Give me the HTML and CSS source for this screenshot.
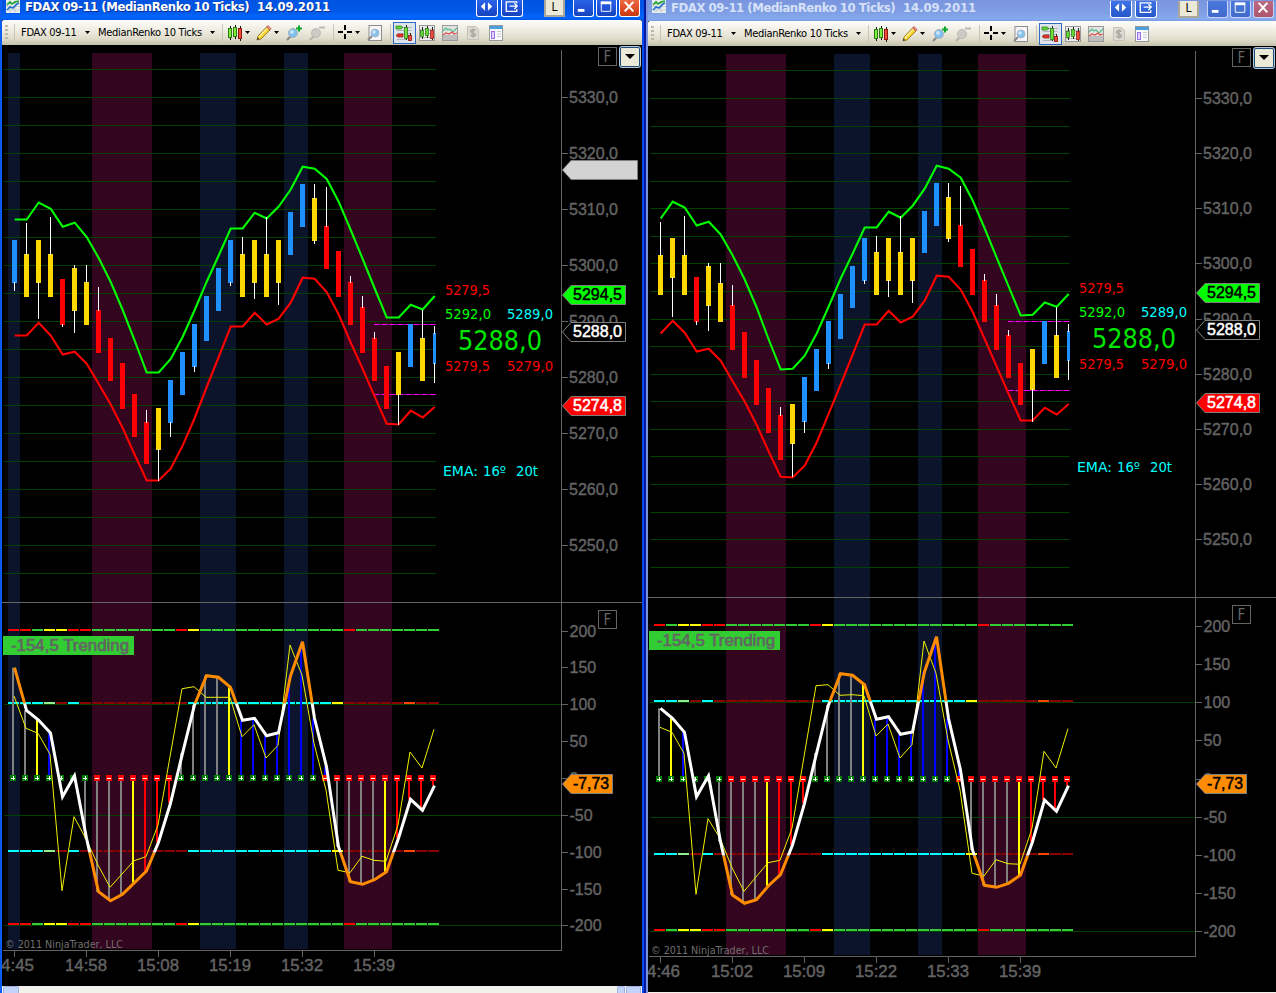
FILE: index.html
```html
<!DOCTYPE html>
<html lang="en">
<head>
    <meta charset="UTF-8">
    <title>FDAX 09-11 (MedianRenko 10 Ticks)</title>
    <link rel="stylesheet" href="styles.css">
</head>
<body>
    <svg class="defs" width="0" height="0">
        <symbol id="i-app" viewBox="0 0 14 13">
            <path d="M0 0h14v13H0z" fill="#e9eef0"/>
            <path d="M0 3h14M0 6.500h14M0 10h14M4 0v13M9 0v13" stroke="#b3bcc2" stroke-width=".6"/>
            <path d="M1 5l3-3 2 2 3-2 4-1" stroke="#1fa32b" stroke-width="1.600" fill="none"/>
            <path d="M1 10l3-3 3 1 4-4 2-1" stroke="#2470c9" stroke-width="1.600" fill="none"/>
        </symbol>
        <symbol id="i-bars" viewBox="0 0 16 16">
            <path d="M3.500 1v14M8.500 0v14M13.500 1v15" stroke="#111"/>
            <rect x="1.500" y="3.500" width="3" height="9" fill="#7df03c" stroke="#2c7a12"/>
            <rect x="6.500" y="2.500" width="3" height="9" fill="#7df03c" stroke="#2c7a12"/>
            <rect x="11.500" y="3.500" width="3" height="10" fill="#f24b3c" stroke="#8e1810"/>
        </symbol>
        <symbol id="i-pencil" viewBox="0 0 16 16">
            <path d="M1 15l1-4 8.500-9L14 5l-9 9z" fill="#f8d32c" stroke="#8b6914" stroke-width=".8"/>
            <path d="M3 12l8.500-9" stroke="#fff09a" stroke-width="1.300"/>
            <path d="M10.500 2L12 .5 15 3.500 14 5z" fill="#f28a80" stroke="#a44" stroke-width=".6"/>
            <path d="M1 15l.6-2.400L3.400 14z" fill="#333"/>
        </symbol>
        <symbol id="i-zoomin" viewBox="0 0 16 16">
            <path d="M1 15l4-4" stroke="#888" stroke-width="2.200"/>
            <circle cx="7" cy="8" r="4.500" fill="#7fbfee" stroke="#a8b4c0"/>
            <circle cx="6" cy="7" r="2" fill="#c8e6fa"/>
            <path d="M10 3.500h6M13 .5v6" stroke="#0ba82a" stroke-width="2"/>
        </symbol>
        <symbol id="i-zoomout" viewBox="0 0 16 16">
            <path d="M1 15l4-4" stroke="#b5b3ac" stroke-width="2.200"/>
            <circle cx="7" cy="8" r="4.500" fill="#cbcac5" stroke="#bdbbb4"/>
            <path d="M10 2.500h6" stroke="#bbb9b2" stroke-width="2"/>
        </symbol>
        <symbol id="i-cross" viewBox="0 0 16 16">
            <path d="M0 7h5M9 7h5M7 0v5M7 9v5" stroke="#000" stroke-width="2"/>
        </symbol>
        <symbol id="i-docmag" viewBox="0 0 16 16">
            <rect x="2" y=".5" width="12.500" height="15" fill="#f6f6f6" stroke="#8d8d8d"/>
            <path d="M1 15l4-4" stroke="#888" stroke-width="2"/>
            <circle cx="8" cy="8" r="4" fill="#86c2ec" stroke="#a8b8c8"/>
            <circle cx="7" cy="7" r="1.700" fill="#d2ebfb"/>
        </symbol>
        <symbol id="i-trader" viewBox="0 0 18 18">
            <path d="M6 3.500h11M2 6.500h14M2 9.500h14M2 15.500h9" stroke="#b2b5b8"/>
            <path d="M1 2h5l2 1.500L6 5H1z" fill="#5fd53a" stroke="#2c7a12" stroke-width=".7"/>
            <path d="M1 11.500L3 10h5v3H3z" fill="#e8372c" stroke="#8e1810" stroke-width=".7"/>
            <path d="M11.500 1v15M15.500 9v8" stroke="#222"/>
            <rect x="9.500" y="3.500" width="3" height="11" fill="#6fe03c" stroke="#2c7a12" stroke-width=".8"/>
            <rect x="13.500" y="11.500" width="3" height="5" fill="#f24b3c" stroke="#8e1810" stroke-width=".8"/>
        </symbol>
        <symbol id="i-candles" viewBox="0 0 16 16">
            <rect x=".5" y=".5" width="15" height="15" fill="#ececec" stroke="#999"/>
            <path d="M1 4.500h14M1 8.500h14M1 12.500h14" stroke="#bbb"/>
            <path d="M3.500 2v12M8.500 1v12M13.500 2v13" stroke="#222"/>
            <rect x="1.500" y="5.500" width="3" height="6" fill="#62d838" stroke="#2c7a12" stroke-width=".7"/>
            <rect x="6.500" y="3.500" width="3" height="7" fill="#62d838" stroke="#2c7a12" stroke-width=".7"/>
            <rect x="11.500" y="5.500" width="3" height="8" fill="#f24b3c" stroke="#8e1810" stroke-width=".7"/>
        </symbol>
        <symbol id="i-lines" viewBox="0 0 16 16">
            <rect x=".5" y=".5" width="15" height="15" fill="#e2e2e2" stroke="#9a9a9a"/>
            <path d="M1 10h14v5H1z" fill="#bdbdbd"/>
            <path d="M1 6l3-3 2 2 2-1 3 3 4-4" fill="none" stroke="#54bd8c" stroke-width="1.200"/>
            <path d="M1 10l3-2 3 1 3-2 2 2 3-1" fill="none" stroke="#e0504a" stroke-width="1.200"/>
        </symbol>
        <symbol id="i-dollar" viewBox="0 0 16 16">
            <path d="M2.500 1.500h8l3 3v10h-11z" fill="#dbdad3" stroke="#c4c2b9"/>
            <path d="M10.500 5.500c-.6-1-4.800-1.300-4.800.8S10.500 8 10.500 10s-4.200 1.900-5-.2M8 3.500v9" fill="none" stroke="#aaa89f" stroke-width="1.500"/>
        </symbol>
        <symbol id="i-panel" viewBox="0 0 16 16">
            <rect x="1.500" y=".5" width="13" height="15" fill="#fafafa" stroke="#999"/>
            <path d="M1.500 1h13v3h-13z" fill="#4a9fdc"/>
            <rect x="3.500" y="6.500" width="3" height="7" fill="#e2d3ff" stroke="#9670e8"/>
            <path d="M9 6.500h4M9 9h4M9 11.500h4" stroke="#c4cbd2"/>
        </symbol>
        <symbol id="i-leftright" viewBox="0 0 20 16">
            <path d="M8.500 2v9L4 6.500zM11.500 2v9L16 6.500z" fill="#fff"/>
        </symbol>
        <symbol id="i-pop" viewBox="0 0 20 16">
            <path d="M15.500 3V1.500H4.500v10h11V9M8 6h8M13 3l3 3-3 3" fill="none" stroke="#fff" stroke-width="1.400"/>
        </symbol>
        <symbol id="i-min" viewBox="0 0 20 16"><path d="M4 9h7v3H4z" fill="#fff"/></symbol>
        <symbol id="i-max" viewBox="0 0 20 16">
            <path d="M4.500 2v9.500h10V2" fill="none" stroke="#fff"/><path d="M4 1h11v3H4z" fill="#fff"/>
        </symbol>
        <symbol id="i-close" viewBox="0 0 20 16"><path d="M5 1.500l9 10M14 1.500l-9 10" stroke="#fff" stroke-width="2.200"/></symbol>
    </svg>

    <div class="desktop">
        <section class="window active">
            <header class="titlebar">
                <svg class="app-icon"><use href="#i-app"/></svg>
                <h1>FDAX 09-11 (MedianRenko 10 Ticks)</h1>
                <span class="title-date">14.09.2011</span>
                <div class="title-buttons">
                    <button class="tb"><svg><use href="#i-leftright"/></svg></button>
                    <button class="tb"><svg><use href="#i-pop"/></svg></button>
                    <button class="link-button">L</button>
                    <button class="tb"><svg><use href="#i-min"/></svg></button>
                    <button class="tb"><svg><use href="#i-max"/></svg></button>
                    <button class="tb close"><svg><use href="#i-close"/></svg></button>
                </div>
            </header>
            <nav class="toolbar">
                <i class="grip"></i>
                <i class="sep sep-first"></i>
                <span class="instrument">FDAX 09-11</span><i class="arrow far"></i>
                <span class="interval">MedianRenko 10 Ticks</span><i class="arrow far"></i>
                <i class="sep"></i>
                <svg class="icon near"><use href="#i-bars"/></svg><i class="arrow"></i>
                <svg class="icon mid"><use href="#i-pencil"/></svg><i class="arrow"></i>
                <svg class="icon"><use href="#i-zoomin"/></svg>
                <svg class="icon"><use href="#i-zoomout"/></svg>
                <i class="sep sep-wide"></i>
                <svg class="icon near"><use href="#i-cross"/></svg><i class="arrow tight"></i>
                <svg class="icon"><use href="#i-docmag"/></svg>
                <i class="sep"></i>
                <span class="selected"><svg><use href="#i-trader"/></svg></span>
                <svg class="icon after-selected"><use href="#i-candles"/></svg>
                <svg class="icon"><use href="#i-lines"/></svg>
                <svg class="icon"><use href="#i-dollar"/></svg>
                <svg class="icon"><use href="#i-panel"/></svg>
            </nav>
            <div class="chart-wrap">
                <svg id="chart-left" class="chart" width="640" height="941" viewBox="2 45 640 941"></svg>
                <button class="chart-menu"></button>
            </div>
            <div class="scrollbar"><i class="sb-left"></i><i class="sb-thumb"></i><i class="sb-right"></i></div>
        </section>

        <section class="window inactive">
            <header class="titlebar">
                <svg class="app-icon"><use href="#i-app"/></svg>
                <h1>FDAX 09-11 (MedianRenko 10 Ticks)</h1>
                <span class="title-date">14.09.2011</span>
                <div class="title-buttons">
                    <button class="tb"><svg><use href="#i-leftright"/></svg></button>
                    <button class="tb"><svg><use href="#i-pop"/></svg></button>
                    <button class="link-button">L</button>
                    <button class="tb"><svg><use href="#i-min"/></svg></button>
                    <button class="tb"><svg><use href="#i-max"/></svg></button>
                    <button class="tb close"><svg><use href="#i-close"/></svg></button>
                </div>
            </header>
            <nav class="toolbar">
                <i class="grip"></i>
                <i class="sep sep-first"></i>
                <span class="instrument">FDAX 09-11</span><i class="arrow far"></i>
                <span class="interval">MedianRenko 10 Ticks</span><i class="arrow far"></i>
                <i class="sep"></i>
                <svg class="icon near"><use href="#i-bars"/></svg><i class="arrow"></i>
                <svg class="icon mid"><use href="#i-pencil"/></svg><i class="arrow"></i>
                <svg class="icon"><use href="#i-zoomin"/></svg>
                <svg class="icon"><use href="#i-zoomout"/></svg>
                <i class="sep sep-wide"></i>
                <svg class="icon near"><use href="#i-cross"/></svg><i class="arrow tight"></i>
                <svg class="icon"><use href="#i-docmag"/></svg>
                <i class="sep"></i>
                <span class="selected"><svg><use href="#i-trader"/></svg></span>
                <svg class="icon after-selected"><use href="#i-candles"/></svg>
                <svg class="icon"><use href="#i-lines"/></svg>
                <svg class="icon"><use href="#i-dollar"/></svg>
                <svg class="icon"><use href="#i-panel"/></svg>
            </nav>
            <div class="chart-wrap">
                <svg id="chart-right" class="chart" width="632" height="946" viewBox="648 46 632 946"></svg>
                <button class="chart-menu"></button>
            </div>
            <div class="scrollbar"></div>
        </section>
    </div>

    <script src="chart.js"></script>
</body>
</html>
```

FILE: styles.css
```css
body {
    margin: 0;
    background-color: #000;
    font-family: "DejaVu Sans Condensed", "DejaVu Sans", sans-serif;
    overflow: hidden;
}

.defs {
    position: absolute;
}

.desktop {
    display: flex;
    width: 1280px;
    height: 993px;
}

.window {
    box-sizing: border-box;
    display: flex;
    flex-direction: column;
    height: 993px;
    overflow: hidden;
}

.active {
    width: 646px;
    border-left: 2px solid #0b5df2;
    border-right: 2px solid #0019a0;
    box-shadow: inset -2px 0 0 #0848ee;
    padding-right: 2px;
}

.inactive {
    width: 634px;
    border-left: 2px solid #7b93df;
}

/* title bar */
.titlebar {
    display: flex;
    align-items: flex-start;
    height: 20px;
    flex-shrink: 0;
    margin-right: -2px;
    background: linear-gradient(#0053e0, #0059ea 60%, #0267ff 85%, #0058ea);
    color: #fff;
}

.inactive .titlebar {
    height: 21px;
    margin-right: 0;
    background: linear-gradient(#7a95de, #7f9fe4 60%, #86abee 90%, #7e9be0);
    color: #d6e1f8;
}

.app-icon {
    width: 14px;
    height: 13px;
    margin-left: 4px;
}

.titlebar h1, .title-date {
    margin: -2px 0 0 5px;
    font: bold 13px/18px "DejaVu Sans Condensed", "DejaVu Sans", sans-serif;
    font-stretch: condensed;
    letter-spacing: -0.1px;
    white-space: pre;
    text-shadow: 1px 1px 0 #0a2f92;
}

.titlebar h1 {
    width: 224px;
    letter-spacing: -0.45px;
}

.title-date {
    margin-left: 8px;
}

.inactive .titlebar h1, .inactive .title-date {
    margin-top: -1px;
    text-shadow: none;
}

.title-buttons {
    display: flex;
    margin-left: auto;
    margin-right: 4px;
}

.inactive .title-buttons {
    margin-right: 6px;
    margin-top: 1px;
}

.tb {
    box-sizing: border-box;
    width: 21px;
    height: 17px;
    margin-left: 2px;
    padding: 0;
    border: 1px solid #fff;
    border-top: none;
    border-radius: 0 0 3px 3px;
    background: linear-gradient(#2a63e8, #1c4cd0 70%, #1643b8);
}

.tb:nth-child(-n+2) {
    width: 22px;
}

.tb:nth-child(2) {
    margin-left: 3px;
}

.tb svg {
    display: block;
    width: 19px;
    height: 16px;
}

.link-button {
    box-sizing: border-box;
    width: 21px;
    height: 17px;
    margin: 0 6px 0 21px;
    padding: 0;
    border: 2px solid #aca899;
    border-top: none;
    background-color: #ece9d8;
    color: #000;
    font: 12px/15px "DejaVu Sans Condensed", "DejaVu Sans", sans-serif;
}

.tb.close {
    background: linear-gradient(#ec6a45, #d9441c 70%, #c03a14);
}

.inactive .tb {
    border-color: #c5d3f5;
    background: linear-gradient(#4a78dd, #4169cc);
}

.inactive .tb.close {
    background: linear-gradient(#bd6a80, #ad5570);
}

.inactive .tb:nth-child(-n+2) {
    border-color: #fff;
    background: linear-gradient(#3e72e6, #2457c8);
}

/* toolbar */
.toolbar {
    display: flex;
    align-items: center;
    height: 25px;
    flex-shrink: 0;
    background: linear-gradient(#fdfdfb, #efede2 40%, #dfdccb 75%, #c3c0ab);
    border-radius: 2px 2px 0 0;
}

.toolbar > * {
    flex-shrink: 0;
}

.grip {
    width: 3px;
    height: 15px;
    margin-left: 3px;
    background: repeating-linear-gradient(#bdb9a6 0, #bdb9a6 2px, transparent 2px, transparent 4px);
}

.sep {
    width: 1px;
    height: 17px;
    margin-left: 7px;
    background-color: #c9c5b4;
}

.sep-first {
    margin-left: 6px;
}

.sep-wide {
    margin-left: 8px;
}

.instrument, .interval {
    font-size: 11px;
    font-stretch: condensed;
    line-height: 16px;
    color: #000;
    white-space: nowrap;
}

.instrument {
    width: 58px;
    margin-left: 6px;
    letter-spacing: -0.3px;
}

.interval {
    width: 106px;
    margin-left: 8px;
    letter-spacing: -0.3px;
}

.arrow {
    width: 5px;
    height: 3px;
    margin-left: 2px;
    background-color: #000;
    clip-path: polygon(0 0, 100% 0, 50% 100%);
}

.arrow.far {
    margin-left: 6px;
}

.arrow.tight {
    margin-left: 1px;
}

.icon {
    width: 16px;
    height: 16px;
    margin-left: 7px;
}

.icon.near {
    margin-left: 4px;
}

.icon.mid {
    margin-left: 6px;
}

.icon.after-selected {
    margin-left: 3px;
}

.selected {
    box-sizing: border-box;
    width: 23px;
    height: 22px;
    margin-left: 2px;
    border: 1px solid #316ac5;
    background-color: #dde4ec;
}

.selected svg {
    display: block;
    width: 18px;
    height: 18px;
    margin: 1px;
}

/* chart */
.chart-wrap {
    position: relative;
    flex-grow: 1;
    height: 0;
    background-color: #000;
}

.chart {
    display: block;
}

.chart-menu {
    box-sizing: border-box;
    position: absolute;
    top: 1px;
    right: 1px;
    width: 22px;
    height: 22px;
    padding: 0;
    border: 2px solid #1e4f7c;
    outline: 1px solid #b9c7d4;
    outline-offset: -1px;
    border-radius: 3px;
    background-color: #ece9d8;
}

.inactive .chart-menu {
    right: 5px;
}

.chart-menu::after {
    content: "";
    display: block;
    width: 0;
    margin: -2px auto 0;
    border: 5px solid transparent;
    border-top-color: #000;
    border-bottom: none;
}

.band-up { fill: #0c142b; }
.band-down { fill: #33051f; }
.grid { stroke: #004000; }
.axis { stroke: #646464; fill: none; }

.axis-text {
    fill: #646464;
    stroke: #646464;
    stroke-width: 0.4px;
    font: 16px "Liberation Sans", Arial, sans-serif;
}

.badge-text {
    fill: #646464;
    stroke: #646464;
    stroke-width: 0.6px;
    font: 16px "Liberation Sans", Arial, sans-serif;
}

.marker-text {
    stroke-width: 0.5px;
    font: 16px "Liberation Sans", Arial, sans-serif;
}

.quote, .quote-big {
    font-family: "DejaVu Sans Condensed", "DejaVu Sans", sans-serif;
    font-stretch: condensed;
    font-size: 14.5px;
}

.quote {
    font-weight: 200;
}

.quote-big {
    font-size: 27px;
}

.note {
    fill: #707070;
    font: 11px "DejaVu Sans Condensed", "DejaVu Sans", sans-serif;
    font-stretch: condensed;
}

.f-text {
    fill: #646464;
    font: 15px "DejaVu Sans Condensed", "DejaVu Sans", sans-serif;
}

/* bottom scrollbar */
.scrollbar {
    display: flex;
    height: 7px;
    flex-shrink: 0;
    background-color: #f3f1ec;
}

.inactive .scrollbar {
    height: 1px;
}

.scrollbar i {
    box-sizing: border-box;
    height: 7px;
    border: 1px solid #9db3e6;
    border-bottom: none;
    border-radius: 2px 2px 0 0;
    background-color: #c4d3f9;
}

.sb-left {
    width: 16px;
    margin-left: 1px;
}

.sb-thumb {
    width: 8px;
    margin-left: auto;
}

.sb-right {
    width: 15px;
    margin: 0 1px;
}
```

FILE: chart.js
```js
const COLORS = {
    b: "#1e90ff", y: "#ffd700", r: "#ff0000",
    R: "#ff0000", G: "#32cd32", Y: "#ffff00",
    C: "#00ffff", L: "#90ee90", D: "#8b0000", O: "#ff4500",
    g: "#808080", B: "#0000ff"
};

// candle: [colour, body top, body bottom, high, low]
const left = {
    id: "chart-left",
    x0: 14, xMin: 4, xMax: 436, axisX: 561, edge: 642, start: 3,
    top: 50, bandTop: 53, bandBottom: 949, split: 602, bottom: 950,
    bands: [["up", 8, 20], ["down", 92, 152], ["up", 200, 236], ["up", 284, 308], ["down", 344, 392]],
    prices: { y: 97, step: 56 },
    levels: [631, 667, 704, 741, 778, 815, 852, 889, 925],
    levelGrid: [704, 815, 925],
    candles: [
        ["b",240,283,0,291],["y",254,297,223,0],["y",240,283,0,319],["y",254,297,217,0],["r",279,325,0,327],
        ["y",268,311,265,333],["y",282,325,265,0],["r",310,353,287,0],["r",338,381,0,0],["r",363,409,0,0],
        ["r",394,437,0,0],["r",422,464,410,0],["y",408,450,0,481],["b",380,423,0,437],["b",352,395,0,0],
        ["b",324,367,0,372],["b",296,341,0,0],["b",268,311,0,0],["b",240,283,0,286],["y",254,297,237,0],
        ["y",240,283,0,299],["y",254,297,217,0],["y",240,283,0,305],["b",212,255,0,0],["b",184,227,0,0],
        ["y",198,241,184,244],["r",226,269,187,0],["r",251,297,0,0],["r",282,325,276,0],["r",307,353,296,0],
        ["r",338,381,332,0],["r",366,409,0,0],["y",352,395,0,425],["b",324,367,0,0],["y",338,381,310,0],
        ["b",333,364,326,383]
    ],
    upper: [219.5,219.5,202.5,208.7,226.7,222.7,237,258,282,310,340.7,372.5,372.5,359,336.7,310,281.7,255.5,228.5,228.5,212.7,218.5,206.5,189.5,166.7,168.7,179,201.7,230,259,288.5,317.5,317.5,304.7,309.5,296],
    lower: [335.5,335.5,322.7,335.5,354.5,351.7,363.7,383.7,404.5,428,454.7,480.5,480.5,468.7,445.5,418,387,357,326.5,326.5,312.7,324.5,318.7,302.7,277.7,278.7,292,314.5,342.5,369,396.7,423.7,424.5,410.7,417.5,407],
    cci: [667.7,710.3,720,733,796.7,775.7,838.3,891.7,900.7,894.3,882.7,871,842.3,803.3,753.3,705,675.7,677.3,687.3,720.3,718.3,735.7,732.7,676,641.7,718.3,766.7,846.7,881.7,884.3,879.7,871.7,838.3,799.3,810.3,785.7],
    turbo: [696,728.3,733.3,754.3,890.7,816.7,839,865,887.3,874,860.7,856.7,825,756.7,688.7,686.7,697.3,697.3,697.3,736.7,724.7,758,745.3,645,675,743.3,790,870.3,872.7,856.3,860.3,861.3,825,752,768,729.3],
    hist: "ggYB  ggggYRRRggggYBBBBBBBBggggYRRRR",
    signs: "+++++++-------++++++++++++----------",
    outer: "RRGYYRRGGGGGGGRYGGGGGGGGGGGGRGGGGGGG",
    inner: "CCCLDCDDDDDDDDDCCCCCCCCCCCCYDDDDDODD",
    outerY: [629, 923], innerY: [702, 850], signY: 775,
    stops: [324, 394], stopX: 374,
    quotes: { x: 445, y: [295, 319, 349.5, 371, 475.7] },
    markers: [[170, "", "#d3d3d3", "#000", 637.5], [295, "5294,5", "#00ff00", "#000", 625.5],
        [332, "5288,0", "#000", "#fff", 625.5], [406, "5274,8", "#ff0000", "#fff", 625.5], [784, "-7,73", "#ff8c00", "#000", 612.5]],
    fY: [47.5, 610.5], badge: [3, 636], noteY: 948,
    times: ["4:45", "14:58", "15:08", "15:19", "15:32", "15:39"]
};

// same series, one bar shorter
const right = {
    id: "chart-right",
    x0: 660, xMin: 650, xMax: 1070, axisX: 1195, edge: 1280, start: 649,
    top: 51, bandTop: 54, bandBottom: 955, split: 597, bottom: 956,
    bands: [["down", 726, 786], ["up", 834, 870], ["up", 918, 942], ["down", 978, 1026]],
    prices: { y: 98, step: 55.15 },
    levels: [626, 664, 702, 740, 779, 817, 855, 893, 931],
    levelGrid: [702, 817, 931],
    candles: [
        ["y",255,295,222,0],["y",238,278,0,317],["y",255,295,216,0],["r",277,322,0,325],["y",266,306,263,331],
        ["y",283,322,263,0],["r",305,350,285,0],["r",332,378,0,0],["r",360,405,0,0],["r",388,433,0,0],
        ["r",415,460,407,0],["y",404,444,0,477],["b",377,422,0,433],["b",349,391,0,0],["b",321,364,0,369],
        ["b",294,339,0,0],["b",266,308,0,0],["b",238,281,0,284],["y",252,295,236,0],["y",238,281,0,297],
        ["y",252,295,216,0],["y",238,281,0,303],["b",211,253,0,0],["b",183,226,0,0],["y",197,239,183,242],
        ["r",225,267,186,0],["r",249,295,0,0],["r",280,322,274,0],["r",305,350,294,0],["r",335,378,330,0],
        ["r",363,405,0,0],["y",349,390,0,422],["b",321,364,0,0],["y",335,378,307,0],["b",331,361,324,380]
    ],
    upper: [218.5,201.7,207.5,225.5,221.7,234.5,255.5,279.5,307.5,339.5,369.5,368.7,355.7,333.5,306.5,278.5,253.5,227.5,227.5,211.7,217.7,205.7,188.7,165.7,168.7,177.7,200.5,228.5,257.7,286.7,315.5,314.7,302.5,306.7,294],
    lower: [333.5,320.7,332.7,351.5,348.7,360.7,381.5,401.5,425,451.5,476.7,477.5,465.5,442.5,413.7,384.5,354.5,324.5,324.5,310.7,322.5,316.7,300.7,275.7,276.7,289.5,312,339,366.7,394,420.5,420.5,407.7,414.5,404],
    cci: [708.3,718.3,732.3,796.7,775.7,841.7,895,903.3,899.7,885.7,874.7,845,803.3,753.3,705,673.7,675.3,684.7,719.3,716.7,734.3,732,671.7,636.7,718.3,770,850,885.3,887.3,883.3,875,841.7,800,811.3,785.7],
    turbo: [727.3,732.3,753.3,894.3,818.7,838.3,867.7,891.3,877,862.7,860.3,828.3,756.7,685.7,684.7,695.3,694.7,695.7,736,724,758,744.7,641,673.3,740,790,873.3,876,859.7,863.7,864.3,828.3,751.3,768,728.7],
    hist: left.hist.slice(1),
    signs: left.signs.slice(1),
    outer: left.outer.slice(1),
    inner: left.inner.slice(1),
    outerY: [624, 929], innerY: [700, 853], signY: 776,
    stops: [321, 390], stopX: 1008,
    quotes: { x: 1079, y: [293, 317, 347.5, 369, 471.7] },
    markers: [[293, "5294,5", "#00ff00", "#000", 1259.5], [330, "5288,0", "#000", "#fff", 1259.5],
        [403, "5274,8", "#ff0000", "#fff", 1259.5], [784, "-7,73", "#ff8c00", "#000", 1246.5]],
    fY: [48.5, 605.5], badge: [649, 631], noteY: 953.5,
    times: ["4:46", "15:02", "15:09", "15:22", "15:33", "15:39"]
};

function rect(x, y, w, h, fill) {
    return `<rect x="${x}" y="${y}" width="${w}" height="${h}" fill="${fill}"/>`;
}

function line(x1, y1, x2, y2, cls) {
    return `<path class="${cls}" d="M${x1} ${y1}L${x2} ${y2}"/>`;
}

function text(x, y, str, cls, width, extra) {
    const len = width ? `textLength="${width}" lengthAdjust="spacingAndGlyphs"` : "";
    return `<text x="${x}" y="${y}" class="${cls}" ${len} ${extra || ""}>${str}</text>`;
}

function poly(values, x0, attrs) {
    const pts = values.map((v, i) => (x0 + i * 12) + "," + v).join(" ");
    return `<polyline points="${pts}" fill="none" ${attrs}/>`;
}

function draw(c) {
    let out = "";
    const n = c.candles.length;

    c.bands.forEach(([kind, a, b]) => {
        out += `<rect class="band-${kind}" x="${a}" y="${c.bandTop}" width="${b - a}" height="${c.bandBottom - c.bandTop}"/>`;
    });

    // price grid, one line every 5 points
    for (let i = -1; i < 18; i++) {
        const y = Math.round(c.prices.y + i * c.prices.step / 2);
        if (y < c.split - 4) out += line(c.xMin, y + 0.5, c.xMax, y + 0.5, "grid");
    }
    c.levelGrid.forEach(y => out += line(c.xMin, y + 0.5, c.axisX, y + 0.5, "grid"));

    // axes
    out += line(c.start - 1, c.split + 0.5, c.edge, c.split + 0.5, "axis");
    out += line(c.axisX + 0.5, c.top, c.axisX + 0.5, c.bottom + 1, "axis");
    out += line(c.start, c.bottom + 0.5, c.axisX, c.bottom + 0.5, "axis");
    for (let i = 0; i < 9; i++) {
        const y = Math.round(c.prices.y + i * c.prices.step);
        out += line(c.axisX, y + 0.5, c.axisX + 7, y + 0.5, "axis");
        out += text(c.axisX + 8, y + 6, (5330 - i * 10) + ",0", "axis-text", 49);
    }
    c.levels.forEach((y, i) => {
        out += line(c.axisX, y + 0.5, c.axisX + 7, y + 0.5, "axis");
        out += text(c.axisX + 8.5, y + 6, 200 - i * 50, "axis-text");
    });
    c.times.forEach((t, i) => {
        const x = c.x0 + i * 72;
        out += line(x + 0.5, c.bottom, x + 0.5, c.bottom + 7, "axis");
        out += text(i ? x : x + 20, c.bottom + 21, t, "axis-text", i ? 42 : 33, `text-anchor="${i ? "middle" : "end"}"`);
    });

    // price panel
    c.stops.forEach(y => {
        out += `<path d="M${c.stopX} ${y + 0.5}H${c.xMax}" stroke="#8b008b"/>`;
        out += `<path d="M${c.stopX} ${y + 0.5}H${c.xMax}" stroke="#ff00ff" stroke-dasharray="5 3"/>`;
    });
    out += poly(c.upper, c.x0 + 0.7, 'stroke="#00ff00" stroke-width="2.1"');
    out += poly(c.lower, c.x0 + 0.7, 'stroke="#ff0000" stroke-width="2.1"');
    c.candles.forEach(([col, top, bottom, high, low], i) => {
        const x = c.x0 + i * 12;
        const last = i === n - 1;
        out += rect(last ? x - 1 : x - 2, top, last ? 3 : 5, bottom - top, COLORS[col]);
        if (high) out += rect(x, high, 1, top - high + 1, "#fff");
        if (low) out += rect(x, bottom - 1, 1, low - bottom + 1, "#fff");
    });

    // indicator panel
    const zero = c.signY + 3;
    for (let i = 0; i < n; i++) {
        const x = c.x0 + i * 12;
        c.outerY.forEach(y => out += rect(x - 6, y, 11, 2, COLORS[c.outer[i]]));
        c.innerY.forEach(y => out += rect(x - 6, y, 11, 2, COLORS[c.inner[i]]));
        if (c.hist[i] !== " ") {
            const y = c.cci[i];
            out += rect(x - 2, Math.min(y, zero), 2, Math.abs(zero - y), COLORS[c.hist[i]]);
        }
        const plus = c.signs[i] === "+";
        out += rect(x - 4, c.signY, 6, 6, plus ? "#008000" : "#ff0000");
        out += rect(x - 3, zero, 4, 1, "#fff");
        if (plus) out += rect(x - 1, zero - 2, 1, 4, "#fff");
    }
    out += poly(c.turbo, c.x0, 'stroke="#f0f000" stroke-width="1"');
    const [hi, lo] = [c.innerY[0] + 1.5, c.innerY[1] + 2.5];
    out += `<clipPath id="${c.id}-in"><rect x="${c.start}" y="${hi}" width="600" height="${lo - hi}"/></clipPath>`;
    out += `<clipPath id="${c.id}-out"><path d="M${c.start} 600h600V${hi}h-600zM${c.start} ${lo}h600V945h-600z"/></clipPath>`;
    out += poly(c.cci, c.x0 + 0.5, `stroke="#ff8c00" stroke-width="3" clip-path="url(#${c.id}-out)"`);
    out += poly(c.cci, c.x0 + 0.5, `stroke="#fff" stroke-width="3" clip-path="url(#${c.id}-in)"`);

    // quotes
    const q = c.quotes;
    out += text(q.x, q.y[0], "5279,5", "quote", 45, 'fill="#ff0000"');
    out += text(q.x, q.y[1], "5292,0", "quote", 46, 'fill="#00ff00"');
    out += text(q.x + 62, q.y[1], "5289,0", "quote", 46, 'fill="#00ffff"');
    out += text(q.x + 13, q.y[2], "5288,0", "quote-big", 84, 'fill="#00e600"');
    out += text(q.x, q.y[3], "5279,5", "quote", 45, 'fill="#ff0000"');
    out += text(q.x + 62, q.y[3], "5279,0", "quote", 46, 'fill="#ff0000"');
    out += text(q.x - 2, q.y[4], "EMA:", "quote", 35, 'fill="#00ffff"');
    out += text(q.x + 38, q.y[4], "16º", "quote", 23, 'fill="#00ffff"');
    out += text(q.x + 71, q.y[4], "20t", "quote", 22, 'fill="#00ffff"');

    // value markers on the axis
    c.markers.forEach(([y, label, fill, color, r]) => {
        const x = c.axisX + 1.5;
        out += `<path d="M${x} ${y}l8.500 -9.500H${r}v19H${x + 8.5}z" fill="${fill}" stroke="#808080"/>`;
        if (label) out += text(c.axisX + 12, y + 5, label, "marker-text", label.length > 5 ? 49 : 36, `fill="${color}" stroke="${color}"`);
    });

    c.fY.forEach(y => {
        const x = c.axisX + 37.5;
        out += `<rect class="axis" x="${x}" y="${y}" width="18" height="18"/>`;
        out += text(x + 5, y + 14.5, "F", "f-text");
    });

    out += rect(c.badge[0], c.badge[1], 131, 19, "#32cd32");
    out += text(c.badge[0] + 8, c.badge[1] + 15, "-154,5 Trending", "badge-text", 118);
    out += text(c.start + 2, c.noteY, "© 2011 NinjaTrader, LLC", "note", 118);

    document.getElementById(c.id).innerHTML = out;
}

draw(left);
draw(right);
```
